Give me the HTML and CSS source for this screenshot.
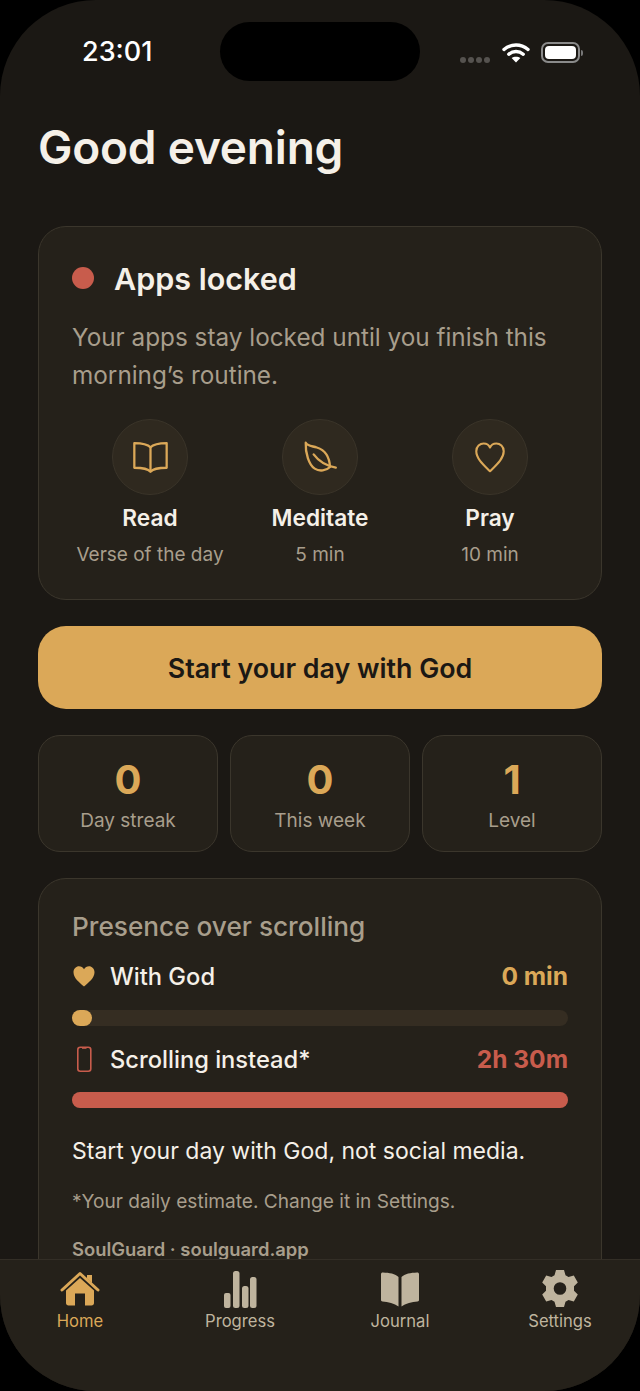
FILE: index.html
```html
<!DOCTYPE html>
<html lang="en">

<head>
    <meta name="viewport" content="width=device-width, initial-scale=1.0">
    <title>SoulGuard</title>
    <link rel="stylesheet" href="styles.css">
</head>

<body>
    <div class="phone">
        <div class="island"></div>

        <div class="statusbar">
            <span class="time">23:01</span>
            <div class="status-icons">
                <div class="signal"><i></i><i></i><i></i><i></i></div>
                <svg class="wifi" width="28" height="21" viewBox="0 0 28 21">
                    <path d="M2 7.5C9 1.5 19 1.5 26 7.5" fill="none" stroke="#fff" stroke-width="3.4" stroke-linecap="round"/>
                    <path d="M6.8 12.2C11 8.6 17 8.6 21.2 12.2" fill="none" stroke="#fff" stroke-width="3.4" stroke-linecap="round"/>
                    <path d="M14 20.5L9.6 16C12 14.2 16 14.2 18.4 16Z" fill="#fff"/>
                </svg>
                <div class="battery"><div class="battery-fill"></div></div>
                <div class="battery-cap"></div>
            </div>
        </div>

        <main class="content">
            <h1 class="greeting">Good evening</h1>

            <section class="card locked">
                <div class="locked-head">
                    <span class="dot"></span>
                    <h2>Apps locked</h2>
                </div>
                <p class="locked-text">Your apps stay locked until you finish this morning’s routine.</p>
                <div class="steps">
                    <div class="step">
                        <div class="step-icon">
                            <svg width="41" height="41" viewBox="0 0 36 36" fill="none" stroke="#dba858" stroke-width="2" stroke-linejoin="round" stroke-linecap="round">
                                <path d="M18 9.500C15.500 6.800 11 5.800 3.800 5.800V27.500C11 27.500 15.500 28 18 31C20.500 28 25 27.500 32.200 27.500V5.800C25 5.800 20.500 6.800 18 9.500Z" transform="translate(0 -0.500)"/>
                                <path d="M18 9V30"/>
                            </svg>
                        </div>
                        <div class="step-name">Read</div>
                        <div class="step-sub">Verse of the day</div>
                    </div>
                    <div class="step">
                        <div class="step-icon">
                            <svg width="38" height="38" viewBox="0 0 36 36" fill="none" stroke="#dba858" stroke-width="2.200" stroke-linejoin="round" stroke-linecap="round">
                                <path d="M4.500 4.500C6 7.500 10 7.500 15 9C23 11.500 27 18 27.500 27.500C24 31 17.500 32 13 29C7.500 25.500 4 14 4.500 4.500Z"/>
                                <path d="M12 15.500C16 21 22 26 33 28"/>
                            </svg>
                        </div>
                        <div class="step-name">Meditate</div>
                        <div class="step-sub">5 min</div>
                    </div>
                    <div class="step">
                        <div class="step-icon">
                            <svg width="38" height="38" viewBox="0 0 36 36" fill="none" stroke="#dba858" stroke-width="2" stroke-linejoin="round">
                                <path d="M18 31.500C12 25.500 5 19.500 5 12.500C5 8 8.500 5.200 12 5.200C14.500 5.200 17 6.500 18 9C19 6.500 21.500 5.200 24 5.200C27.500 5.200 31 8 31 12.500C31 19.500 24 25.500 18 31.500Z"/>
                            </svg>
                        </div>
                        <div class="step-name">Pray</div>
                        <div class="step-sub">10 min</div>
                    </div>
                </div>
            </section>

            <button class="start-btn">Start your day with God</button>

            <div class="stats">
                <div class="stat"><div class="stat-num">0</div><div class="stat-label">Day streak</div></div>
                <div class="stat"><div class="stat-num">0</div><div class="stat-label">This week</div></div>
                <div class="stat"><div class="stat-num">1</div><div class="stat-label">Level</div></div>
            </div>

            <section class="card presence">
                <h3>Presence over scrolling</h3>

                <div class="row">
                    <svg class="row-icon" width="24" height="24" viewBox="0 0 24 24">
                        <path d="M12 22.500C7 18 1.500 14 1.500 8.200C1.500 4.600 4.200 2.200 7 2.200C9 2.200 11 3.200 12 5.200C13 3.200 15 2.200 17 2.200C19.800 2.200 22.500 4.600 22.500 8.200C22.500 14 17 18 12 22.500Z" fill="#dba858"/>
                    </svg>
                    <span class="row-label">With God</span>
                    <span class="row-value gold">0 min</span>
                </div>
                <div class="bar"><div class="bar-fill gold-fill" style="width: 20px"></div></div>

                <div class="row row-second">
                    <svg class="row-icon" width="24" height="26" viewBox="0 0 24 26" fill="none" stroke="#c85c4c" stroke-width="1.600">
                        <rect x="5.800" y="1.200" width="13" height="24" rx="2.500"/>
                        <path d="M10 2H14.500"/>
                    </svg>
                    <span class="row-label">Scrolling instead*</span>
                    <span class="row-value red">2h 30m</span>
                </div>
                <div class="bar bar-second"><div class="bar-fill red-fill" style="width: 100%"></div></div>

                <p class="presence-text">Start your day with God, not social media.</p>
                <p class="presence-note">*Your daily estimate. Change it in Settings.</p>
                <p class="presence-brand">SoulGuard · soulguard.app</p>
            </section>
        </main>

        <nav class="tabbar">
            <div class="tab active">
                <svg width="40" height="38" viewBox="0 0 40 38">
                    <path d="M2 20L20 3.500L38 20" fill="none" stroke="#dba858" stroke-width="3" stroke-linecap="round" stroke-linejoin="round"/>
                    <path d="M27 5H32V13L27 8.500Z" fill="#dba858"/>
                    <path d="M6 20.500L20 8L34 20.500V33C34 34.500 33 35.500 31.500 35.500H25V23.500H15V35.500H8.500C7 35.500 6 34.500 6 33Z" fill="#dba858"/>
                </svg>
                <span>Home</span>
            </div>
            <div class="tab">
                <svg width="40" height="38" viewBox="0 0 40 38" fill="#bfb49e">
                    <rect x="4" y="23" width="6.500" height="15" rx="2"/>
                    <rect x="13" y="1" width="6.500" height="37" rx="2.500"/>
                    <rect x="22" y="16" width="6.500" height="22" rx="2.500"/>
                    <rect x="30" y="7" width="6.500" height="31" rx="2.500"/>
                </svg>
                <span>Progress</span>
            </div>
            <div class="tab">
                <svg width="40" height="38" viewBox="0 0 40 38" fill="#bfb49e">
                    <path d="M18.500 7V36.500C14.500 33.500 8 32 2.500 31.500C1.500 31.400 1 30.800 1 30V4C1 3 1.800 2.300 3 2.400C9 2.700 15.500 3.500 18.500 7Z"/>
                    <path d="M21.500 7V36.500C25.500 33.500 32 32 37.500 31.500C38.500 31.400 39 30.800 39 30V4C39 3 38.200 2.300 37 2.400C31 2.700 24.500 3.500 21.500 7Z"/>
                </svg>
                <span>Journal</span>
            </div>
            <div class="tab">
                <svg width="40" height="38" viewBox="0 0 40 38">
                    <path fill="#bfb49e" fill-rule="evenodd" d="M16 0H24L25.500 5.200L28.500 6.900L33.800 5.600L37.800 12.400L34 16.300V20.700L37.800 24.600L33.800 31.400L28.500 30.100L25.500 31.800L24 37H16L14.500 31.800L11.500 30.100L6.200 31.400L2.200 24.600L6 20.700V16.300L2.200 12.400L6.200 5.600L11.500 6.900L14.500 5.200ZM20 12.200A6.300 6.300 0 1 0 20 24.800A6.300 6.300 0 1 0 20 12.200Z"/>
                </svg>
                <span>Settings</span>
            </div>
        </nav>
    </div>
</body>

</html>
```

FILE: styles.css
```css
* {
    box-sizing: border-box;
}

html,
body {
    margin: 0;
    padding: 0;
    background-color: #000;
}

body {
    font-family: Inter, 'Liberation Sans', sans-serif;
    width: 640px;
    height: 1391px;
    overflow: hidden;
}

.phone {
    position: relative;
    width: 640px;
    height: 1391px;
    background-color: #1b1814;
    border-radius: 96px;
    overflow: hidden;
    display: flex;
    flex-direction: column;
}

.island {
    position: absolute;
    left: 220px;
    top: 22px;
    width: 200px;
    height: 59px;
    background-color: #000;
    border-radius: 30px;
}

.statusbar {
    height: 103px;
    flex-shrink: 0;
    padding: 36px 57px 0 82px;
    display: flex;
    justify-content: space-between;
    align-items: flex-start;
}

.time {
    color: #fff;
    font-size: 27px;
    font-weight: 500;
    line-height: 32px;
}

.status-icons {
    display: flex;
    align-items: center;
    margin-top: 6px;
}

.signal {
    display: flex;
    gap: 2px;
    margin-top: 14px;
    margin-right: 12px;
}

.signal i {
    width: 6px;
    height: 6px;
    border-radius: 50%;
    background-color: #55524f;
}

.wifi {
    margin-right: 11px;
}

.battery {
    width: 39px;
    height: 21px;
    border: 2px solid #8a8a8a;
    border-radius: 7px;
    padding: 2px;
}

.battery-fill {
    width: 100%;
    height: 100%;
    background-color: #fff;
    border-radius: 4px;
}

.battery-cap {
    width: 2px;
    height: 6px;
    margin-left: 1px;
    background-color: #777;
    border-radius: 0 2px 2px 0;
}

.content {
    flex: 1;
    min-height: 0;
    overflow: hidden;
    padding: 8px 38px 0;
}

.greeting {
    margin: 0 0 43px;
    font-size: 46px;
    font-weight: 600;
    line-height: 72px;
    color: #f5f0e8;
    letter-spacing: -0.2px;
}

.card {
    background-color: #25211a;
    border: 1px solid #3b362c;
    border-radius: 28px;
    padding: 0 33px;
}

.locked {
    height: 374px;
    padding-top: 31px;
}

.locked-head {
    display: flex;
    align-items: center;
    gap: 20px;
    height: 40px;
}

.dot {
    width: 22px;
    height: 22px;
    border-radius: 50%;
    background-color: #c85c4c;
}

.locked-head h2 {
    margin: 0;
    font-size: 30.500px;
    font-weight: 600;
    color: #f5f0e8;
}

.locked-text {
    margin: 20px 0 0;
    font-size: 24.300px;
    line-height: 38px;
    color: #a89e8c;
}

.steps {
    display: grid;
    grid-template-columns: repeat(3, 170px);
    justify-content: center;
    margin-top: 25px;
}

.step {
    display: flex;
    flex-direction: column;
    align-items: center;
}

.step-icon {
    width: 76px;
    height: 76px;
    border-radius: 50%;
    background-color: #2f291f;
    border: 1px solid #3a3429;
    display: flex;
    align-items: center;
    justify-content: center;
}

.step-name {
    margin-top: 8px;
    font-size: 22.700px;
    font-weight: 600;
    line-height: 30px;
    color: #f5f0e8;
}

.step-sub {
    margin-top: 10px;
    font-size: 19px;
    line-height: 24px;
    color: #a89e8c;
    white-space: nowrap;
}

.start-btn {
    display: block;
    width: 100%;
    height: 83px;
    margin-top: 26px;
    border: none;
    border-radius: 28px;
    background-color: #dba858;
    color: #1b1814;
    font-family: inherit;
    font-size: 26.800px;
    font-weight: 600;
}

.stats {
    display: grid;
    grid-template-columns: repeat(3, 1fr);
    gap: 12px;
    margin-top: 26px;
}

.stat {
    height: 117px;
    background-color: #25211a;
    border: 1px solid #3b362c;
    border-radius: 22px;
    text-align: center;
    padding-top: 20px;
}

.stat-num {
    font-size: 40px;
    font-weight: 700;
    line-height: 48px;
    color: #dba858;
}

.stat-label {
    margin-top: 4px;
    font-size: 19px;
    line-height: 26px;
    color: #a89e8c;
}

.presence {
    margin-top: 26px;
    height: 460px;
    padding-top: 30px;
}

.presence h3 {
    margin: 0;
    font-size: 26.200px;
    font-weight: 500;
    line-height: 36px;
    color: #a89e8c;
}

.row {
    display: flex;
    align-items: center;
    height: 36px;
    margin-top: 13px;
}

.row-second {
    margin-top: 15px;
}

.row-icon {
    width: 24px;
    margin-right: 14px;
    flex-shrink: 0;
}

.row-label {
    flex: 1;
    font-size: 23.700px;
    font-weight: 500;
    color: #f5f0e8;
}

.row-value {
    font-size: 24.500px;
    font-weight: 700;
}

.gold {
    color: #dba858;
}

.red {
    color: #c85c4c;
}

.bar {
    height: 16px;
    margin-top: 16px;
    border-radius: 8px;
    background-color: #352d22;
}

.bar-second {
    margin-top: 15px;
}

.bar-fill {
    height: 100%;
    border-radius: 8px;
}

.gold-fill {
    background-color: #dba858;
}

.red-fill {
    background-color: #c85c4c;
}

.presence-text {
    margin: 25px 0 0;
    font-size: 23px;
    line-height: 36px;
    color: #f5f0e8;
}

.presence-note {
    margin: 17px 0 0;
    font-size: 19.100px;
    line-height: 30px;
    color: #a89e8c;
}

.presence-brand {
    margin: 23px 0 0;
    font-size: 18.400px;
    font-weight: 600;
    line-height: 20px;
    color: #a89e8c;
}

.tabbar {
    height: 132px;
    flex-shrink: 0;
    background-color: #25211a;
    border-top: 1px solid #332e26;
    display: grid;
    grid-template-columns: repeat(4, 160px);
    padding-top: 10px;
}

.tab {
    display: flex;
    flex-direction: column;
    align-items: center;
    gap: 1px;
    font-size: 16.600px;
    line-height: 24px;
    color: #bfb49e;
}

.tab.active {
    color: #dba858;
}
```
